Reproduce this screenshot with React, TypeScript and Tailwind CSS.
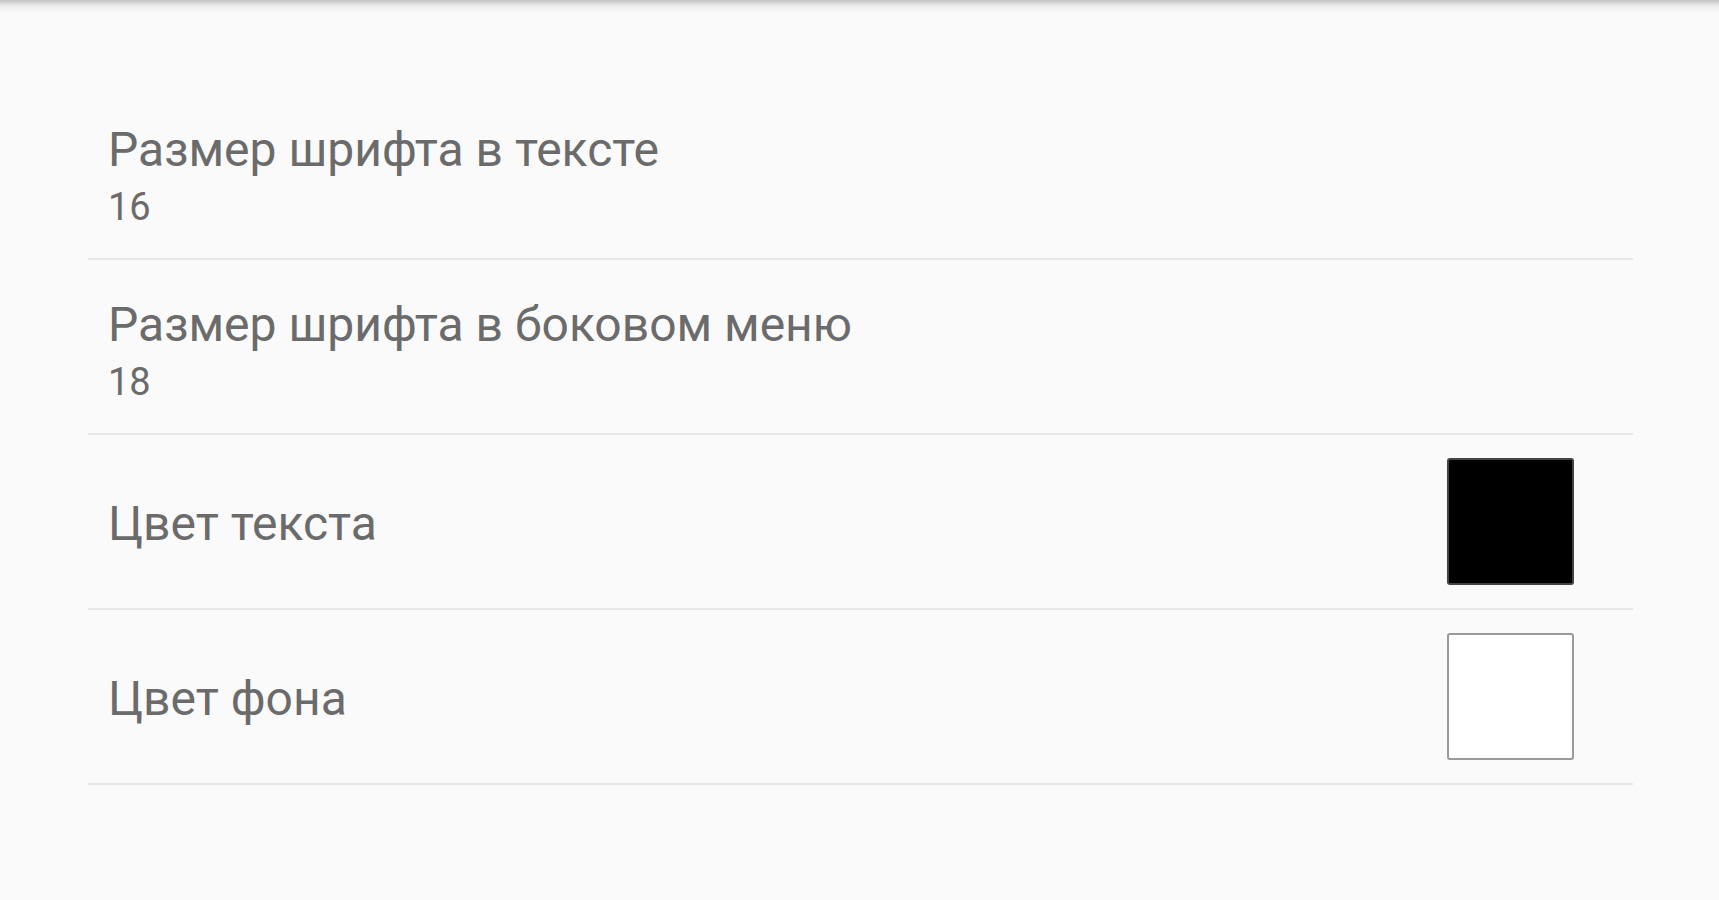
import React from "react";

type Pref = {
  id: string;
  title: string;
  summary?: string;
  swatch?: "black" | "white";
};

const PREFS: Pref[] = [
  { id: "text-size", title: "Размер шрифта в тексте", summary: "16" },
  { id: "menu-size", title: "Размер шрифта в боковом меню", summary: "18" },
  { id: "text-color", title: "Цвет текста", swatch: "black" },
  { id: "bg-color", title: "Цвет фона", swatch: "white" },
];

export default function App() {
  return (
    <div
      className="relative min-h-[900px] w-full bg-[#fafafa]"
      style={{ fontFamily: "Roboto, 'Noto Sans', sans-serif" }}
    >
      {/* action bar shadow */}
      <div className="pointer-events-none absolute inset-x-0 top-0 h-[12px] bg-gradient-to-b from-[#c4c4c4] via-[#ececec] to-transparent" />

      <main className="ml-[88px] mr-[86px] pt-[85px]">
        <ul className="flex flex-col">
          {PREFS.map((p) => (
            <li
              key={p.id}
              className="flex h-[175px] items-center justify-between border-b-2 border-[#e8e8e8] pl-[20px] pr-[59px]"
            >
              <div
                className={`flex flex-col text-[#6b6b6b] ${
                  p.summary ? "pt-[9px]" : "pt-[4px]"
                }`}
              >
                <span className="text-[48px] leading-[62px]">{p.title}</span>
                {p.summary && (
                  <span className="text-[38px] leading-[52px]">{p.summary}</span>
                )}
              </div>

              {p.swatch === "black" && (
                <div className="h-[127px] w-[127px] rounded-[3px] border-2 border-[#444] bg-black" />
              )}
              {p.swatch === "white" && (
                <div className="h-[127px] w-[127px] rounded-[3px] border-2 border-[#9a9a9a] bg-white" />
              )}
            </li>
          ))}
        </ul>
      </main>
    </div>
  );
}
